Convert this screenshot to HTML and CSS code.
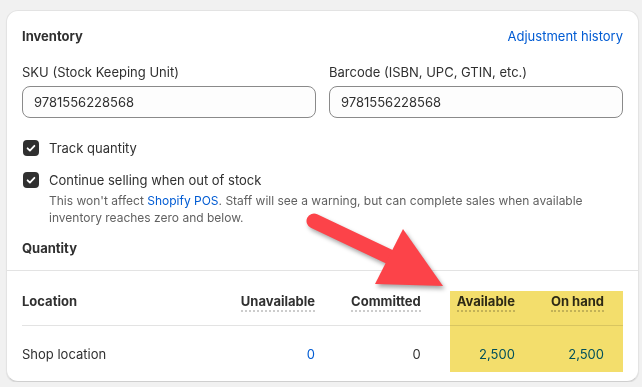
FILE: index.html
```html
<!DOCTYPE html>
<html lang="en">
<head>
    <meta charset="UTF-8">
    <title>Inventory</title>
    <link rel="stylesheet" href="styles.css">
</head>
<body>
    <div class="card">
        <div class="section">
            <div class="card-header">
                <h2>Inventory</h2>
                <a href="#" class="link">Adjustment history</a>
            </div>

            <div class="fields">
                <div class="field">
                    <label for="sku">SKU (Stock Keeping Unit)</label>
                    <input type="text" id="sku" value="9781556228568">
                </div>
                <div class="field">
                    <label for="barcode">Barcode (ISBN, UPC, GTIN, etc.)</label>
                    <input type="text" id="barcode" value="9781556228568">
                </div>
            </div>

            <div class="checks">
                <div class="check">
                    <span class="box">
                        <svg viewBox="0 0 16 16"><path d="M4.6 8.3l2.3 2.3 4.5-4.8" fill="none" stroke="#fff" stroke-width="1.8" stroke-linecap="round" stroke-linejoin="round"/></svg>
                    </span>
                    <span>Track quantity</span>
                </div>
                <div class="check">
                    <span class="box">
                        <svg viewBox="0 0 16 16"><path d="M4.6 8.3l2.3 2.3 4.5-4.8" fill="none" stroke="#fff" stroke-width="1.8" stroke-linecap="round" stroke-linejoin="round"/></svg>
                    </span>
                    <span>Continue selling when out of stock</span>
                </div>
                <p class="help">This won't affect <a href="#" class="link">Shopify POS</a>. Staff will see a warning, but can complete sales when available inventory reaches zero and below.</p>
            </div>

            <h3>Quantity</h3>
        </div>

        <div class="quantity">
            <div class="cell head name">Location</div>
            <div class="cell head"><span class="tip">Unavailable</span></div>
            <div class="cell head"><span class="tip">Committed</span></div>
            <div class="cell head"><span class="tip">Available</span></div>
            <div class="cell head last"><span class="tip">On hand</span></div>

            <div class="cell name">Shop location</div>
            <div class="cell"><a href="#" class="link">0</a></div>
            <div class="cell">0</div>
            <div class="cell"><a href="#" class="link">2,500</a></div>
            <div class="cell last"><a href="#" class="link">2,500</a></div>
        </div>
    </div>

    <!-- annotation -->
    <div class="highlight"></div>
    <svg class="arrow" width="642" height="387" viewBox="0 0 642 387">
        <line x1="314" y1="221" x2="392" y2="258" stroke="#fc4349" stroke-width="15" stroke-linecap="round"/>
        <polygon points="403,229 375,284 443,286" fill="#fc4349"/>
    </svg>
</body>
</html>
```

FILE: styles.css
```css
body {
    margin: 0;
    background-color: #f1f1f1;
    font-family: Inter, "Noto Sans", sans-serif;
    font-size: 13px;
    line-height: 20px;
    color: #303030;
}

.card {
    margin: 10px 3px 0 6px;
    background: #fff;
    border: 1px solid #e3e3e3;
    border-bottom-color: #cfcfcf;
    border-radius: 12px;
    box-shadow: 0 1px 1px rgba(0, 0, 0, 0.08);
    padding-bottom: 17px;
}

.section {
    padding: 15px 15px 12px;
}

.card-header {
    display: flex;
    justify-content: space-between;
    align-items: center;
}

h2, h3 {
    margin: 0;
    font-size: 13px;
    font-weight: 650;
}

.link {
    color: #005bd3;
    text-decoration: none;
}

.fields {
    display: grid;
    grid-template-columns: 1fr 1fr;
    column-gap: 13px;
    margin-top: 16px;
}

.field label {
    display: block;
    margin-bottom: 4px;
}

.field input {
    box-sizing: border-box;
    width: 100%;
    height: 32px;
    padding: 0 11px;
    border: 1px solid #8a8a8a;
    border-radius: 8px;
    background: #fdfdfd;
    font-family: inherit;
    font-size: 13px;
    color: #303030;
}

.checks {
    margin-top: 20px;
}

.check {
    display: flex;
    align-items: center;
    gap: 10px;
    margin-bottom: 12px;
}

.check:last-of-type {
    margin-bottom: 2px;
}

.box {
    width: 16px;
    height: 16px;
    margin-left: 1px;
    border-radius: 4px;
    background: #303030;
    display: flex;
}

.box svg {
    width: 16px;
    height: 16px;
}

.help {
    margin: 0 0 12px 27px;
    color: #616161;
    font-size: 12px;
    line-height: 17px;
}

.quantity {
    display: grid;
    grid-template-columns: 1fr auto auto auto auto;
    border-top: 1px solid #e3e3e3;
    padding: 20px 15px 0;
}

.cell {
    text-align: right;
    padding: 18px 0 0 36px;
}

.cell.name {
    text-align: left;
    padding-left: 0;
}

.cell.last {
    padding-right: 19px;
}

.cell.head {
    padding-top: 1px;
    padding-bottom: 13px;
    border-bottom: 1px solid #e3e3e3;
    font-weight: 650;
    line-height: 18px;
}

.tip {
    display: inline-block;
    border-bottom: 2px dotted #cccccc;
}

.highlight {
    position: absolute;
    left: 450px;
    top: 291px;
    width: 173px;
    height: 81px;
    background: #f3de6c;
    mix-blend-mode: multiply;
}

.arrow {
    position: absolute;
    left: 0;
    top: 0;
    pointer-events: none;
    filter: drop-shadow(2px 3px 2px rgba(0, 0, 0, 0.35));
}
```
